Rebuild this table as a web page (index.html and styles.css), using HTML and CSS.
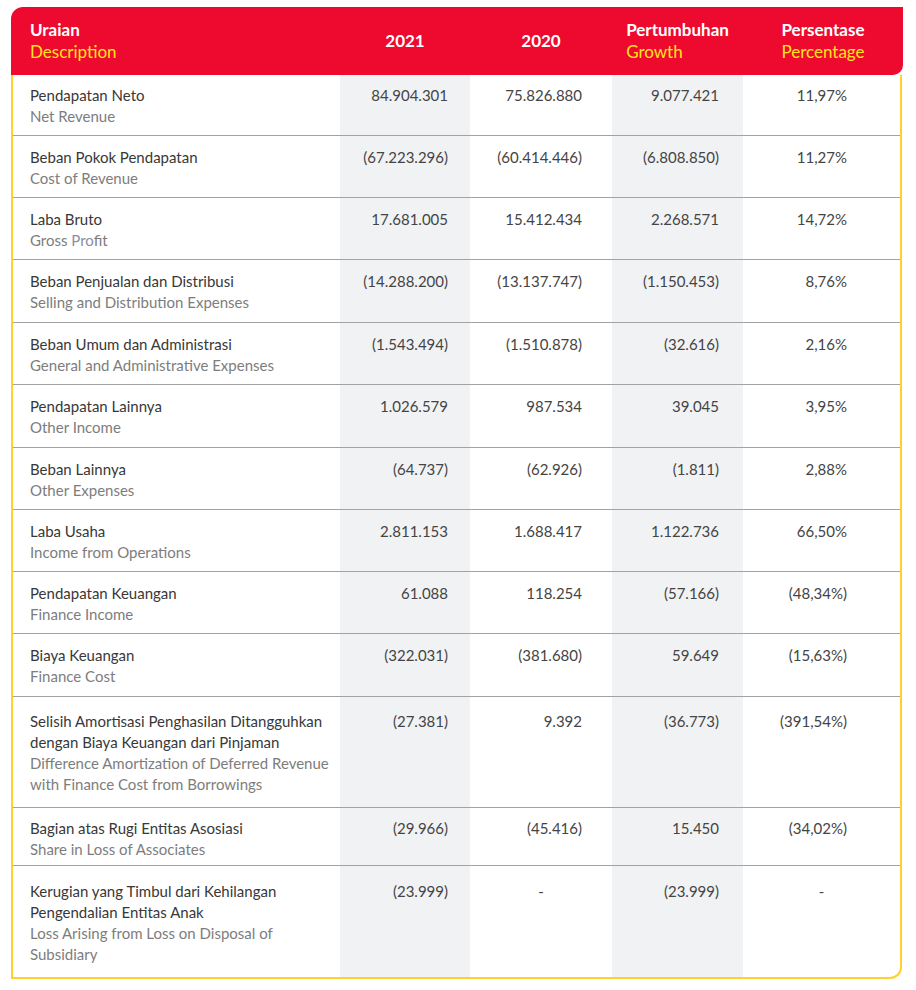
FILE: index.html
```html
<!DOCTYPE html>
<html lang="id">
<head>
<meta charset="utf-8">
<title>Ikhtisar Laba Rugi</title>
<link rel="stylesheet" href="styles.css">
</head>
<body>
<div class="fin">
  <div class="fin-head">
    <div class="h-cell h-desc"><span class="h-id">Uraian</span><span class="h-en">Description</span></div>
    <div class="h-cell h-num"><span class="h-id">2021</span></div>
    <div class="h-cell h-num"><span class="h-id">2020</span></div>
    <div class="h-cell h-num"><div class="h-block"><span class="h-id">Pertumbuhan</span><span class="h-en">Growth</span></div></div>
    <div class="h-cell h-num"><div class="h-block"><span class="h-id">Persentase</span><span class="h-en">Percentage</span></div></div>
  </div>
  <div class="fin-body">
    <div class="row first">
      <div class="c desc"><p class="id">Pendapatan Neto</p><p class="en">Net Revenue</p></div>
      <div class="c n1">84.904.301</div><div class="c n2">75.826.880</div><div class="c n3">9.077.421</div><div class="c n4">11,97%</div>
    </div>
    <div class="row">
      <div class="c desc"><p class="id">Beban Pokok Pendapatan</p><p class="en">Cost of Revenue</p></div>
      <div class="c n1">(67.223.296)</div><div class="c n2">(60.414.446)</div><div class="c n3">(6.808.850)</div><div class="c n4">11,27%</div>
    </div>
    <div class="row">
      <div class="c desc"><p class="id">Laba Bruto</p><p class="en">Gross <span class="tint">Pro</span>fit</p></div>
      <div class="c n1">17.681.005</div><div class="c n2">15.412.434</div><div class="c n3">2.268.571</div><div class="c n4">14,72%</div>
    </div>
    <div class="row plus">
      <div class="c desc"><p class="id">Beban Penjualan dan Distribusi</p><p class="en">Selling and Distribution Expenses</p></div>
      <div class="c n1">(14.288.200)</div><div class="c n2">(13.137.747)</div><div class="c n3">(1.150.453)</div><div class="c n4">8,76%</div>
    </div>
    <div class="row">
      <div class="c desc"><p class="id">Beban Umum dan Administrasi</p><p class="en">General and Administrative Expenses</p></div>
      <div class="c n1">(1.543.494)</div><div class="c n2">(1.510.878)</div><div class="c n3">(32.616)</div><div class="c n4">2,16%</div>
    </div>
    <div class="row plus">
      <div class="c desc"><p class="id">Pendapatan Lainnya</p><p class="en">Other Income</p></div>
      <div class="c n1">1.026.579</div><div class="c n2">987.534</div><div class="c n3">39.045</div><div class="c n4">3,95%</div>
    </div>
    <div class="row">
      <div class="c desc"><p class="id">Beban Lainnya</p><p class="en">Other Expenses</p></div>
      <div class="c n1">(64.737)</div><div class="c n2">(62.926)</div><div class="c n3">(1.811)</div><div class="c n4">2,88%</div>
    </div>
    <div class="row">
      <div class="c desc"><p class="id">Laba Usaha</p><p class="en">Income from Operations</p></div>
      <div class="c n1">2.811.153</div><div class="c n2">1.688.417</div><div class="c n3">1.122.736</div><div class="c n4">66,50%</div>
    </div>
    <div class="row">
      <div class="c desc"><p class="id">Pendapatan Keuangan</p><p class="en">Finance Income</p></div>
      <div class="c n1">61.088</div><div class="c n2">118.254</div><div class="c n3">(57.166)</div><div class="c n4">(48,34%)</div>
    </div>
    <div class="row plus">
      <div class="c desc"><p class="id">Biaya Keuangan</p><p class="en">Finance Cost</p></div>
      <div class="c n1">(322.031)</div><div class="c n2">(381.680)</div><div class="c n3">59.649</div><div class="c n4">(15,63%)</div>
    </div>
    <div class="row tall">
      <div class="c desc"><p class="id">Selisih Amortisasi Penghasilan Ditangguhkan dengan Biaya Keuangan dari Pinjaman</p><p class="en">Difference Amortization of Deferred Revenue with Finance Cost from Borrowings</p></div>
      <div class="c n1">(27.381)</div><div class="c n2">9.392</div><div class="c n3">(36.773)</div><div class="c n4">(391,54%)</div>
    </div>
    <div class="row short">
      <div class="c desc"><p class="id">Bagian atas Rugi Entitas Asosiasi</p><p class="en">Share in Loss of Associates</p></div>
      <div class="c n1">(29.966)</div><div class="c n2">(45.416)</div><div class="c n3">15.450</div><div class="c n4">(34,02%)</div>
    </div>
    <div class="row last">
      <div class="c desc"><p class="id">Kerugian yang Timbul dari Kehilangan Pengendalian Entitas Anak</p><p class="en">Loss Arising from Loss on Disposal of Subsidiary</p></div>
      <div class="c n1">(23.999)</div><div class="c n2 dash">-</div><div class="c n3">(23.999)</div><div class="c n4 dash">-</div>
    </div>
  </div>
</div>
</body>
</html>
```

FILE: styles.css
```css
* { box-sizing: border-box; }
html, body { margin: 0; padding: 0; background: #ffffff; }
body {
  font-family: Lato, "Noto Sans", "Liberation Sans", sans-serif;
  color: #3a3a3a;
}
p { margin: 0; }

.fin {
  margin: 7px 0 0 11px;
  width: 892px;
}

.fin-head {
  display: grid;
  grid-template-columns: 329px 130px 142px 131px 160px;
  height: 68px;
  background: #ee0a2e;
  border-radius: 12px 0 10px 0;
  color: #ffffff;
  font-size: 17px;
  line-height: 22px;
  position: relative;
  z-index: 1;
}
.h-cell {
  display: flex;
  flex-direction: column;
  justify-content: center;
}
.h-desc { padding-left: 19px; }
.h-num { align-items: center; }
.h-block { display: flex; flex-direction: column; align-items: flex-start; }
.h-id { font-weight: 700; color: #ffffff; }
.h-en { font-weight: 400; color: #ffe41c; }

.fin-body {
  width: 891px;
  border: 2px solid #ffd130;
  border-top: none;
  border-radius: 0 0 12px 0;
  overflow: hidden;
  font-size: 15px;
  line-height: 21px;
}

.row {
  display: grid;
  grid-template-columns: 327px 130px 142px 131px 157px;
  border-top: 1px solid #a3a3a3;
}
.row.first { border-top: none; }

.c {
  padding: 11px 0 8px;
  text-align: right;
  color: #444444;
}
.row.plus .c { padding-bottom: 9px; }
.row.first .c { padding-top: 10px; padding-bottom: 8px; }
.row.tall .c { padding-top: 14px; padding-bottom: 12px; }
.row.short .c { padding-top: 10px; padding-bottom: 5px; }
.row.last .c { padding-top: 15px; padding-bottom: 12px; }

.desc { text-align: left; padding-left: 17px; padding-right: 8px; }
.desc .id { color: #383838; }
.desc .en { color: #7d7d7d; }
.tint { color: #8a8fa0; }

.n1 { background: #f1f2f4; padding-right: 22px; }
.n2 { padding-right: 30px; }
.n3 { background: #f1f2f4; padding-right: 24px; }
.n4 { padding-right: 53px; }
.dash { text-align: center; padding-right: 0; }
```
